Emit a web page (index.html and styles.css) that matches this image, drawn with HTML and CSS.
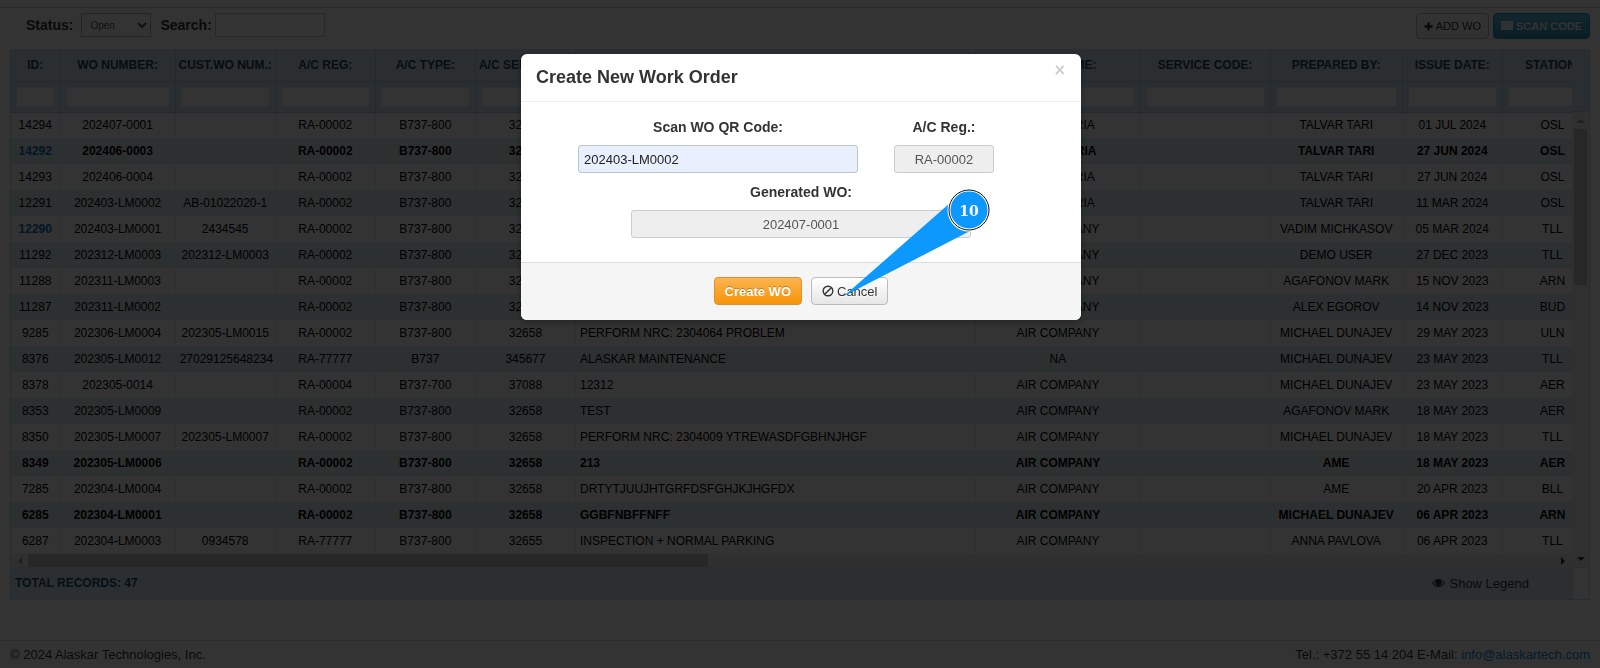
FILE: index.html
```html
<!DOCTYPE html>
<html lang="en">
<head>
<meta charset="utf-8">
<title>Work Orders</title>
<link rel="stylesheet" href="styles.css">
</head>
<body>
<div class="page">
  <header class="toolbar">
    <div class="filters">
      <label for="status">Status:</label>
      <select id="status" class="status"><option>Open</option></select>
      <label for="search">Search:</label>
      <input id="search" class="search" type="text">
    </div>
    <div class="actions">
      <button class="btn btn-small" type="button"><svg class="icon-plus" viewBox="0 0 10 10"><path d="M3.7 0.5h2.6v3.2h3.2v2.6H6.300v3.200H3.700V6.300H.5V3.700h3.200z"/></svg>ADD WO</button>
      <button class="btn btn-small btn-info" type="button"><svg class="icon-scan" viewBox="0 0 12 10"><path d="M0 0h12v9H0z"/><path class="slits" d="M2 1v7M4.500 1v7M7 1v7M9.500 1v7"/></svg>SCAN CODE</button>
    </div>
  </header>
  <main class="grid">
    <div class="view">
      <table class="orders">
        <colgroup><col class="w-id"><col class="w-wo"><col class="w-std"><col class="w-std"><col class="w-std"><col class="w-std"><col class="w-desc"><col class="w-cust"><col class="w-serv"><col class="w-prep"><col class="w-std"><col class="w-std"></colgroup>
        <thead>
          <tr class="titles"><th>ID:</th><th>WO NUMBER:</th><th>CUST.WO NUM.:</th><th>A/C REG:</th><th>A/C TYPE:</th><th>A/C SERIAL NO:</th><th>DESCRIPTION:</th><th>CUST. NAME:</th><th>SERVICE CODE:</th><th>PREPARED BY:</th><th>ISSUE DATE:</th><th>STATION:</th></tr>
          <tr class="search-row"></tr>
        </thead>
        <tbody></tbody>
      </table>
      <div class="hscroll"><svg viewBox="0 0 4 8"><path d="M4 0v8L0 4z"/></svg><span class="htrack"><span class="hthumb"></span></span><svg class="on" viewBox="0 0 4 8"><path d="M0 0v8l4-4z"/></svg></div>
    </div>
    <div class="gutter">
      <div class="gutter-head"></div>
      <svg viewBox="0 0 8 4"><path d="M0 4h8L4 0z"/></svg>
      <div class="vtrack"><div class="vthumb"></div></div>
      <svg class="on" viewBox="0 0 8 4"><path d="M0 0h8L4 4z"/></svg>
    </div>
    <div class="summary"><strong>TOTAL RECORDS: 47</strong>
      <button class="legend" type="button"><svg viewBox="0 0 14 10"><path fill-rule="evenodd" d="M0 5Q3 .6 7 .6T14 5Q11 9.400 7 9.400T0 5zM1.200 5Q3.500 8.300 7 8.300T12.800 5Q11.800 3.300 10 2.400A3.500 3.500 0 1 1 4 2.400Q2.200 3.300 1.200 5z"/></svg>Show Legend</button>
    </div>
    <div class="corner"></div>
  </main>
  <footer class="footer"><span>© 2024 Alaskar Technologies, Inc.</span><span>Tel.: +372 55 14 204 E-Mail: <a href="mailto:info@alaskartech.com">info@alaskartech.com</a></span></footer>
</div>
<div class="backdrop">
  <section class="modal" role="dialog" aria-labelledby="modal-title">
    <div class="modal-head"><h3 id="modal-title">Create New Work Order</h3><button class="close" type="button" aria-label="Close">×</button></div>
    <div class="modal-body">
      <div class="fields">
        <div class="field field-code"><label for="code">Scan WO QR Code:</label><input id="code" class="filled" type="text" value="202403-LM0002"></div>
        <div class="field field-reg"><label for="reg">A/C Reg.:</label><input id="reg" type="text" value="RA-00002" disabled></div>
      </div>
      <div class="field field-gen"><label for="gen">Generated WO:</label><input id="gen" type="text" value="202407-0001" disabled></div>
    </div>
    <div class="modal-foot">
      <button class="btn btn-warning" type="button">Create WO</button>
      <button class="btn" type="button"><svg class="icon-ban" viewBox="0 0 12 12"><circle cx="6" cy="6" r="4.800"/><path d="M9.300 2.700L2.700 9.300"/></svg>Cancel</button>
    </div>
    <svg class="callout" viewBox="0 0 130 114"><path class="tail" d="M2 108L108 15L128 43z"/><circle class="ring-light" cx="127" cy="22" r="20"/><circle class="ring-dark" cx="127" cy="22" r="20"/><text x="127" y="28">10</text></svg>
  </section>
</div>
<script src="script.js"></script>
</body>
</html>
```
FILE: styles.css
```css
* { box-sizing: border-box; }
body { margin: 0; background: #fff; color: #333; font: 13px/20px "Liberation Sans", Arial, sans-serif; }
input, select, button { font-family: inherit; margin: 0; }
.page { margin-top: 7px; border-top: 1px solid #ccc; min-height: calc(100vh - 7px); display: flex; flex-direction: column; }

.toolbar { display: flex; justify-content: space-between; align-items: flex-start; padding: 5px 10px 0 26px; height: 41px; }
.filters { display: flex; align-items: center; }
.filters label { font-size: 14px; font-weight: bold; line-height: 24px; }
.status { width: 70px; height: 24px; margin: 0 9px 0 8px; padding: 0 4px; font-size: 10px; color: #555; background: #fff; border: 1px solid #bbb; }
.search { width: 110px; height: 24px; margin-left: 3px; border: 1px solid #ccc; background: #fff; }
.actions { display: flex; gap: 4px; }
.btn { display: inline-flex; align-items: center; height: 28px; padding: 0 10px; border: 1px solid #bbb; border-radius: 4px; background: linear-gradient(#fff, #e6e6e6); color: #333; font-size: 13px; font-weight: 400; text-shadow: 0 1px 1px rgba(255,255,255,.75); }
.btn svg { margin-right: 3px; fill: currentColor; }
.btn-small { height: 26px; padding: 0 7px; font-size: 11px; background: linear-gradient(#fff, #f2f2f2); }
.btn-info { font-weight: bold; color: #fff; border-color: #2f96b4; background: linear-gradient(#5bc0de, #2f96b4); text-shadow: 0 -1px 0 rgba(0,0,0,.25); }
.icon-plus { width: 9px; height: 9px; }
.icon-scan { width: 12px; height: 10px; }
.icon-scan .slits { stroke: #3aa5c2; stroke-width: .3; }

.grid { display: grid; grid-template-columns: minmax(0, 1fr) 17px; margin: 0 10px; border: 1px solid #c5dbec; border-top-color: #d5e2ee; }
.view { overflow: hidden; }
.orders { table-layout: fixed; width: 1592px; border-collapse: collapse; color: #111; font-size: 12px; line-height: 16px; }
.w-id { width: 49px; } .w-wo { width: 115px; } .w-std { width: 100px; } .w-desc { width: 400px; }
.w-cust { width: 164px; } .w-serv { width: 130px; } .w-prep { width: 132px; }
.orders th { height: 31px; padding: 0; background: #d0e4f4; border-right: 1px solid #b0cde4; border-bottom: 1px solid #b0cde4; color: #26455f; white-space: nowrap; }
.orders .search-row th { height: 31px; padding: 0 5px; }
.search-row input { display: block; width: 100%; height: 20px; border: 1px solid #e0e6ea; background: #fff; }
.orders td { height: 26px; padding: 0 4px; text-align: center; border-right: 1px solid #e6eaec; white-space: nowrap; color: #000; }
.orders tbody tr:nth-child(even) { background: #dfeeef; }
.orders tbody tr:nth-child(even) td { border-color: #dfeeef; }
.orders td:nth-child(7) { text-align: left; }
.orders .bold td { font-weight: bold; }
.orders td a { color: #0a6ebd; font-weight: bold; text-decoration: none; }
.hscroll { display: flex; align-items: center; height: 13px; padding: 0 7px; background: #f1f1f1; }
.hscroll svg { width: 4px; height: 8px; fill: #999; }
.htrack { flex: 1; height: 13px; margin: 0 6px; }
.hthumb { display: block; width: 44.5%; height: 13px; background: #c1c1c1; }
.gutter { display: flex; flex-direction: column; align-items: center; background: #f1f1f1; }
.gutter-head { width: 100%; height: 62px; background: #d0e4f4; border-bottom: 1px solid #b0cde4; }
.gutter svg { width: 8px; height: 4px; margin: 7px 0 6px; fill: #999; }
.gutter svg.on, .hscroll svg.on { fill: #333; }
.vtrack { width: 13px; flex: 1; }
.vthumb { height: 37%; background: #c1c1c1; }
.summary { display: flex; justify-content: space-between; align-items: center; height: 32px; padding: 0 43px 0 4px; background: #dcebf6; color: #1d4a70; font-size: 12px; }
.legend { display: flex; align-items: center; gap: 4px; padding: 0; border: 0; background: none; color: #333; font-size: 13px; }
.legend svg { width: 13px; height: 10px; fill: currentColor; }
.corner { border-left: 1px solid #e0e0e0; border-top: 1px solid #e0e0e0; }
.footer { display: flex; justify-content: space-between; margin-top: auto; padding: 4px 10px 3px; border-top: 1px solid #ddd; font-size: 13px; }
.footer a { color: #08c; text-decoration: none; }

.backdrop { position: fixed; inset: 0; display: flex; justify-content: center; align-items: flex-start; padding: 54px 0 0 2px; background: rgba(0,0,0,.8); }
.modal { position: relative; width: 560px; max-width: 100%; border-radius: 6px; background: #fff; box-shadow: 0 3px 7px rgba(0,0,0,.3); color: #333; }
.modal-head { display: flex; justify-content: space-between; align-items: flex-start; padding: 9px 15px; border-bottom: 1px solid #eee; }
.modal-head h3 { margin: 0; font-size: 18px; line-height: 29px; }
.close { padding: 0; border: 0; background: none; color: #ccc; font: bold 15px/14px "DejaVu Sans", sans-serif; }
.modal-body { display: flex; flex-direction: column; align-items: center; padding: 15px 30px 24px; }
.fields { display: flex; gap: 36px; margin-right: 30px; }
.field { display: flex; flex-direction: column; align-items: center; }
.field label { font-size: 14px; font-weight: bold; line-height: 20px; margin-bottom: 8px; }
.field input { width: 100%; height: 28px; padding: 0 5px; border: 1px solid #ccc; border-radius: 3px; font-size: 13px; text-align: center; color: #555; background: #eee; }
.field input.filled { text-align: left; color: #222; background: #e8f0fe; border-color: #bcc4d0; }
.field-code { width: 280px; }
.field-reg { width: 100px; }
.field-gen { width: 340px; margin-top: 9px; }
.modal-foot { display: flex; justify-content: center; gap: 9px; padding: 14px 15px 15px; border-top: 1px solid #ddd; border-radius: 0 0 6px 6px; background: #f5f5f5; }
.btn-warning { font-weight: bold; color: #fff; border-color: #de9128; background: linear-gradient(#fbb450, #f89406); text-shadow: 0 -1px 0 rgba(0,0,0,.25); }
.icon-ban { width: 12px; height: 12px; }
.btn .icon-ban { fill: none; stroke: #333; stroke-width: 1.400; }
.callout { position: absolute; left: 321px; top: 134px; width: 130px; height: 114px; overflow: visible; pointer-events: none; }
.callout .tail { fill: #0c98fd; }
.ring-light { fill: #0c98fd; stroke: #fff; stroke-width: 3; }
.ring-dark { fill: none; stroke: #111; stroke-width: 1; }
.callout text { fill: #fff; font: bold 14px "DejaVu Serif", serif; text-anchor: middle; }
```
FILE: script.js
```js
const rows = [
  ["14294", "202407-0001", "", "RA-00002", "B737-800", "32658", "", "AIR BAVARIA", "", "TALVAR TARI", "01 JUL 2024", "OSL"],
  ["14292", "202406-0003", "", "RA-00002", "B737-800", "32658", "", "AIR BAVARIA", "", "TALVAR TARI", "27 JUN 2024", "OSL", "bold link"],
  ["14293", "202406-0004", "", "RA-00002", "B737-800", "32658", "", "AIR BAVARIA", "", "TALVAR TARI", "27 JUN 2024", "OSL"],
  ["12291", "202403-LM0002", "AB-01022020-1", "RA-00002", "B737-800", "32658", "", "AIR BAVARIA", "", "TALVAR TARI", "11 MAR 2024", "OSL"],
  ["12290", "202403-LM0001", "2434545", "RA-00002", "B737-800", "32658", "", "AIR COMPANY", "", "VADIM MICHKASOV", "05 MAR 2024", "TLL", "link"],
  ["11292", "202312-LM0003", "202312-LM0003", "RA-00002", "B737-800", "32658", "", "AIR COMPANY", "", "DEMO USER", "27 DEC 2023", "TLL"],
  ["11288", "202311-LM0003", "", "RA-00002", "B737-800", "32658", "", "AIR COMPANY", "", "AGAFONOV MARK", "15 NOV 2023", "ARN"],
  ["11287", "202311-LM0002", "", "RA-00002", "B737-800", "32658", "", "AIR COMPANY", "", "ALEX EGOROV", "14 NOV 2023", "BUD"],
  ["9285", "202306-LM0004", "202305-LM0015", "RA-00002", "B737-800", "32658", "PERFORM NRC: 2304064 PROBLEM", "AIR COMPANY", "", "MICHAEL DUNAJEV", "29 MAY 2023", "ULN"],
  ["8376", "202305-LM0012", "27029125648234", "RA-77777", "B737", "345677", "ALASKAR MAINTENANCE", "NA", "", "MICHAEL DUNAJEV", "23 MAY 2023", "TLL"],
  ["8378", "202305-0014", "", "RA-00004", "B737-700", "37088", "12312", "AIR COMPANY", "", "MICHAEL DUNAJEV", "23 MAY 2023", "AER"],
  ["8353", "202305-LM0009", "", "RA-00002", "B737-800", "32658", "TEST", "AIR COMPANY", "", "AGAFONOV MARK", "18 MAY 2023", "AER"],
  ["8350", "202305-LM0007", "202305-LM0007", "RA-00002", "B737-800", "32658", "PERFORM NRC: 2304009 YTREWASDFGBHNJHGF", "AIR COMPANY", "", "MICHAEL DUNAJEV", "18 MAY 2023", "TLL"],
  ["8349", "202305-LM0006", "", "RA-00002", "B737-800", "32658", "213", "AIR COMPANY", "", "AME", "18 MAY 2023", "AER", "bold"],
  ["7285", "202304-LM0004", "", "RA-00002", "B737-800", "32658", "DRTYTJUUJHTGRFDSFGHJKJHGFDX", "AIR COMPANY", "", "AME", "20 APR 2023", "BLL"],
  ["6285", "202304-LM0001", "", "RA-00002", "B737-800", "32658", "GGBFNBFFNFF", "AIR COMPANY", "", "MICHAEL DUNAJEV", "06 APR 2023", "ARN", "bold"],
  ["6287", "202304-LM0003", "0934578", "RA-77777", "B737-800", "32655", "INSPECTION + NORMAL PARKING", "AIR COMPANY", "", "ANNA PAVLOVA", "06 APR 2023", "TLL"]
];
const titles = [...document.querySelectorAll(".titles th")].map(th => th.textContent);
document.querySelector(".search-row").innerHTML = titles.map(t => `<th><input type="text" aria-label="${t}"></th>`).join("");
document.querySelector(".orders tbody").innerHTML = rows.map(r => {
  const flags = r[12] || "";
  const cells = r.slice(0, 12).map((v, i) => `<td>${i === 0 && flags.includes("link") ? `<a href="#${v}">${v}</a>` : v}</td>`);
  return `<tr class="${flags.includes("bold") ? "bold" : ""}">${cells.join("")}</tr>`;
}).join("");
```
